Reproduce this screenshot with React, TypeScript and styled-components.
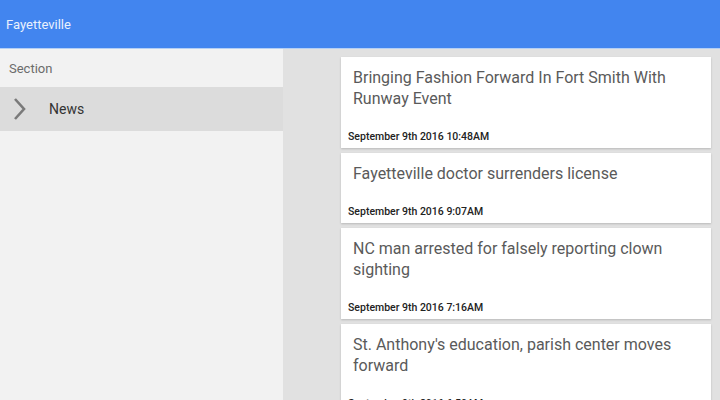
import styled, { createGlobalStyle } from 'styled-components';

const GlobalStyle = createGlobalStyle`
  html, body {
    margin: 0;
    padding: 0;
    height: 100%;
    overflow: hidden;
  }
  body {
    font-family: Roboto, "Noto Sans", "Liberation Sans", sans-serif;
  }
  #root {
    height: 100%;
  }
`;

const Page = styled.div`
  display: flex;
  flex-direction: column;
  width: 720px;
  height: 400px;
  overflow: hidden;
`;

const Header = styled.header`
  height: 49px;
  flex-shrink: 0;
  display: flex;
  align-items: center;
  padding-left: 6px;
  background-color: #4285ef;
  border-bottom: 1px solid #b4cff5;
  box-sizing: border-box;
`;

const HeaderTitle = styled.span`
  color: #e9f1fd;
  font-size: 13px;
`;

const Body = styled.div`
  flex: 1;
  display: flex;
  min-height: 0;
`;

const Sidebar = styled.nav`
  width: 283px;
  flex-shrink: 0;
  display: flex;
  flex-direction: column;
  background-color: #f2f2f2;
`;

const SectionLabel = styled.div`
  height: 38px;
  display: flex;
  align-items: center;
  padding-left: 9px;
  color: #6b6b6b;
  font-size: 13px;
`;

const NavItem = styled.div<{ $active?: boolean }>`
  height: 44px;
  display: flex;
  align-items: center;
  padding-left: 12px;
  gap: 21px;
  background-color: ${(p) => (p.$active ? '#dcdcdc' : 'transparent')};
  color: #333;
  font-size: 14px;
`;

const Feed = styled.main`
  flex: 1;
  background-color: #e1e1e1;
  padding: 8px 9px 0 58px;
  display: flex;
  flex-direction: column;
  gap: 5px;
  overflow: hidden;
`;

const Card = styled.article`
  background-color: #fff;
  padding: 10px 0 5px 0;
  box-shadow: 0 1px 2px rgba(0, 0, 0, 0.18);
  flex-shrink: 0;
`;

const Title = styled.h2`
  margin: 0 12px 22px 12px;
  font-size: 16px;
  font-weight: 400;
  line-height: 21px;
  color: #5a5a5a;
`;

const Timestamp = styled.div`
  padding-left: 7px;
  font-size: 10.5px;
  font-weight: 500;
  line-height: 12px;
  color: #222;
`;

const Chevron = () => (
  <svg width="16" height="24" viewBox="0 0 16 24">
    <path d="M3 2 L12 12 L3 22" fill="none" stroke="#7a7a7a" strokeWidth="2.6" />
  </svg>
);

const stories = [
  { title: 'Bringing Fashion Forward In Fort Smith With Runway Event', date: 'September 9th 2016 10:48AM' },
  { title: 'Fayetteville doctor surrenders license', date: 'September 9th 2016 9:07AM' },
  { title: 'NC man arrested for falsely reporting clown sighting', date: 'September 9th 2016 7:16AM' },
  { title: "St. Anthony's education, parish center moves forward", date: 'September 9th 2016 6:50AM' },
];

export default function App() {
  return (
    <>
      <GlobalStyle />
      <Page>
        <Header>
          <HeaderTitle>Fayetteville</HeaderTitle>
        </Header>
        <Body>
          <Sidebar>
            <SectionLabel>Section</SectionLabel>
            <NavItem $active>
              <Chevron />
              <span>News</span>
            </NavItem>
          </Sidebar>
          <Feed>
            {stories.map((s, i) => (
              <Card key={i}>
                <Title>{s.title}</Title>
                <Timestamp>{s.date}</Timestamp>
              </Card>
            ))}
          </Feed>
        </Body>
      </Page>
    </>
  );
}
